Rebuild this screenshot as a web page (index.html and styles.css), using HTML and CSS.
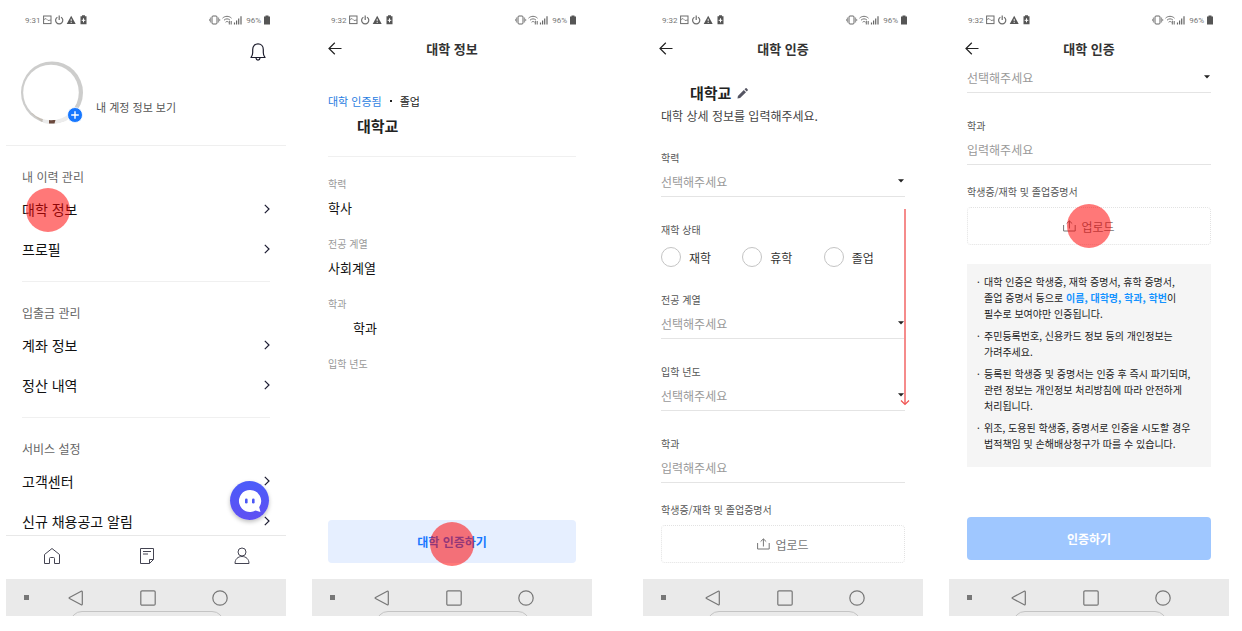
FILE: index.html
```html
<!DOCTYPE html>
<html lang="ko">
<head>
<meta charset="utf-8">
<meta name="viewport" content="width=device-width, initial-scale=1">
<title>대학 인증</title>
<link rel="stylesheet" href="styles.css">
</head>
<body>
<svg class="sprite" aria-hidden="true">
  <symbol id="status-left" viewBox="0 0 44 10">
    <g fill="none" stroke="#6c6c6c">
      <rect x="0.6" y="1" width="7.4" height="7.6"/>
      <path d="M1 4.500l2-1 2 2 3-.5" stroke-width=".8"/>
      <path d="M14.400 2.200a3.600 3.600 0 1 0 3.600 0M16.200.5v4.600" stroke-width="1.200"/>
    </g>
    <path d="M28.200.8l4.500 8.200h-9z" fill="#555"/>
    <path d="M28.200 3.800v2.500M28.200 7v1" stroke="#fff" stroke-width=".9"/>
    <path d="M39 .3h3v1h1.500v8h-6v-8H39z" fill="#555"/>
    <path d="M40.500 3.300v4M38.700 5.300h3.600" stroke="#fff"/>
  </symbol>
  <symbol id="status-right" viewBox="0 0 34 10">
    <g fill="none" stroke="#666">
      <rect x="3" y="1" width="5" height="8" rx="1"/>
      <path d="M1.400 2.500v5M9.600 2.500v5M.3 4v2M10.700 4v2" stroke-width=".7"/>
      <path d="M13.500 3.200c2.500-2.500 6.500-2.500 9 0M15 5.200c1.800-1.800 4.300-1.800 6 0M16.600 7.200c.9-.9 2-.9 2.800 0" stroke-width=".9"/>
      <path d="M20.300 6v3.500M22.200 6v3.500" stroke-width="1"/>
      <path d="M25.500 7.500v2M27.600 5.500v4M29.700 3.500v6M32 1.200v8.300" stroke-width="1.200"/>
    </g>
  </symbol>
  <symbol id="battery" viewBox="0 0 6 10"><path d="M1.500.5h3v1H6v8H0v-8h1.500z" fill="#555"/></symbol>
  <symbol id="back" viewBox="0 0 14 13"><path d="M6.800.8L1 6.500l5.800 5.700M1 6.500h12.500" fill="none" stroke="#222" stroke-width="1.200"/></symbol>
  <symbol id="chevron" viewBox="0 0 6 10"><path d="M.8.900L5 5 .8 9.100" fill="none" stroke="#1d1d33" stroke-width="1.200"/></symbol>
  <symbol id="caret" viewBox="0 0 6 4"><path d="M0 .3h6L3 3.600z" fill="#222"/></symbol>
  <symbol id="upload" viewBox="0 0 13 12"><path d="M.6 5v6h11.600V5M6.400 8.500V1M3.600 3.600L6.400.9l2.800 2.700" fill="none" stroke="#777"/></symbol>
  <symbol id="nav-back" viewBox="0 0 16 16"><path d="M13.200 1.300Q14.300.8 14.300 2v12q0 1.200-1.100.7L1.500 8.600q-.9-.6 0-1.200z" fill="none" stroke="#777" stroke-width="1.200"/></symbol>
  <symbol id="nav-home" viewBox="0 0 16 16"><rect x=".8" y=".8" width="14.400" height="14.400" rx="1.200" fill="none" stroke="#777" stroke-width="1.200"/></symbol>
  <symbol id="nav-recent" viewBox="0 0 16 16"><circle cx="8" cy="8" r="7.200" fill="none" stroke="#777" stroke-width="1.200"/></symbol>
</svg>

<main class="board">
  <div class="pair">
    <section class="phone">
      <div class="status"><span>9:31</span><svg class="status-left"><use href="#status-left"/></svg><svg class="status-right"><use href="#status-right"/></svg><span>96%</span><svg class="battery"><use href="#battery"/></svg></div>
      <div class="screen home">
        <div class="bell-row">
          <button class="icon-button" aria-label="알림">
            <svg class="bell" viewBox="0 0 16 18"><path d="M1 14.500c1.500-1.700 1.700-2.500 1.700-5V6.500C2.700 3 5 .8 8 .8s5.300 2.200 5.300 5.700v3c0 2.500.2 3.300 1.700 5zM6 15c.2 2.700 3.800 2.700 4 0" fill="none" stroke="#1d1d2d" stroke-width="1.200" stroke-linejoin="round"/></svg>
          </button>
        </div>
        <div class="profile">
          <div class="avatar">
            <svg class="avatar-ring" viewBox="0 0 62 63">
              <circle cx="31" cy="31.500" r="31" fill="#cdcdcc"/>
              <path d="M14 50L23 62q10 2.500 22-2l8-8z" fill="#ececec"/>
              <path d="M10 52l11 9 1-3-10-8z" fill="#c4beb6"/>
              <path d="M28 59h6.500l-1 3.400H28z" fill="#6b4a3e"/>
              <circle cx="30" cy="31.500" r="27.800" fill="#fff"/>
            </svg>
            <svg class="avatar-add" viewBox="0 0 16 16"><circle cx="8" cy="8" r="7.500" fill="#1677ff" stroke="#fff" stroke-width=".8"/><path d="M8 4.200v7.600M4.200 8h7.600" stroke="#fff" stroke-width="1.400"/></svg>
          </div>
          <a class="profile-link" href="#">내 계정 정보 보기</a>
        </div>
        <nav class="menu">
          <h2 class="menu-title">내 이력 관리</h2>
          <a class="menu-item" href="#">대학 정보<svg class="chevron"><use href="#chevron"/></svg><span class="tap tap-menu"></span></a>
          <a class="menu-item" href="#">프로필<svg class="chevron"><use href="#chevron"/></svg></a>
        </nav>
        <nav class="menu">
          <h2 class="menu-title">입출금 관리</h2>
          <a class="menu-item" href="#">계좌 정보<svg class="chevron"><use href="#chevron"/></svg></a>
          <a class="menu-item" href="#">정산 내역<svg class="chevron"><use href="#chevron"/></svg></a>
        </nav>
        <nav class="menu">
          <h2 class="menu-title">서비스 설정</h2>
          <a class="menu-item" href="#">고객센터<svg class="chevron"><use href="#chevron"/></svg></a>
          <a class="menu-item" href="#">신규 채용공고 알림<svg class="chevron"><use href="#chevron"/></svg></a>
        </nav>
      </div>
      <nav class="tabs">
        <a href="#" aria-label="홈"><svg class="tab-icon" viewBox="0 0 18 18"><path d="M1.500 7.500L9 1.500l7.500 6v9h-5v-5q0-1-1-1h-3q-1 0-1 1v5h-5z" fill="none" stroke="#444452"/></svg></a>
        <a href="#" aria-label="공고"><svg class="tab-icon" viewBox="0 0 18 18"><path d="M2.500 1.500h13v11l-4 4h-9zM15.500 12.500h-4v4M5 4.500h8M5 7h5" fill="none" stroke="#444452"/></svg></a>
        <a href="#" aria-label="내 정보"><svg class="tab-icon" viewBox="0 0 18 18"><path d="M2 16.500c0-4.500 3-7 7-7s7 2.500 7 7z" fill="none" stroke="#444452"/><circle cx="9" cy="5" r="4" fill="none" stroke="#444452"/></svg></a>
        <button class="chat" aria-label="상담">
          <svg class="chat-icon" viewBox="0 0 24 24"><path d="M12 1a11 11 0 1 0 5.500 20.500L22.500 23l-1.300-4.800A11 11 0 0 0 12 1z" fill="#fff"/><rect x="7" y="9.500" width="2.600" height="5" rx="1.300" fill="#4b57f5"/><rect x="14" y="9.500" width="2.600" height="5" rx="1.300" fill="#4b57f5"/></svg>
        </button>
      </nav>
      <div class="system-nav"><i class="dot"></i><svg><use href="#nav-back"/></svg><svg><use href="#nav-home"/></svg><svg><use href="#nav-recent"/></svg></div>
    </section>

    <section class="phone">
      <div class="status"><span>9:32</span><svg class="status-left"><use href="#status-left"/></svg><svg class="status-right"><use href="#status-right"/></svg><span>96%</span><svg class="battery"><use href="#battery"/></svg></div>
      <header class="header"><button class="icon-button" aria-label="뒤로"><svg class="back"><use href="#back"/></svg></button><h1 class="title">대학 정보</h1></header>
      <div class="screen info">
        <div class="summary">
          <p class="verified"><span class="blue">대학 인증됨</span><i class="separator"></i><span>졸업</span></p>
          <h2 class="school">대학교</h2>
        </div>
        <dl class="details">
          <dt>학력</dt><dd>학사</dd>
          <dt>전공 계열</dt><dd>사회계열</dd>
          <dt>학과</dt><dd class="masked">학과</dd>
          <dt>입학 년도</dt>
        </dl>
        <button class="action action-light">대학 인증하기<span class="tap tap-center tap-low"></span></button>
      </div>
      <div class="system-nav"><i class="dot"></i><svg><use href="#nav-back"/></svg><svg><use href="#nav-home"/></svg><svg><use href="#nav-recent"/></svg></div>
    </section>
  </div>

  <div class="pair">
    <section class="phone">
      <div class="status"><span>9:32</span><svg class="status-left"><use href="#status-left"/></svg><svg class="status-right"><use href="#status-right"/></svg><span>96%</span><svg class="battery"><use href="#battery"/></svg></div>
      <header class="header"><button class="icon-button" aria-label="뒤로"><svg class="back"><use href="#back"/></svg></button><h1 class="title">대학 인증</h1></header>
      <form class="screen form">
        <div class="intro">
          <h2 class="school">대학교<svg class="pencil" viewBox="0 0 11 11"><path d="M.5 10.500l.4-2.600L6.800 2l2.200 2.200-5.900 5.900zM7.500 1.300L8.600.3q.5-.4 1 0l1.100 1.100q.4.500 0 1L9.700 3.500z" fill="#555562"/></svg></h2>
          <p class="guide">대학 상세 정보를 입력해주세요.</p>
        </div>
        <div class="field">
          <label for="degree">학력</label>
          <div class="select"><select id="degree"><option>선택해주세요</option></select><svg class="caret"><use href="#caret"/></svg></div>
        </div>
        <fieldset class="field">
          <legend>재학 상태</legend>
          <div class="radios">
            <label><input type="radio" name="state">재학</label>
            <label><input type="radio" name="state">휴학</label>
            <label><input type="radio" name="state">졸업</label>
          </div>
        </fieldset>
        <div class="field">
          <label for="major">전공 계열</label>
          <div class="select"><select id="major"><option>선택해주세요</option></select><svg class="caret"><use href="#caret"/></svg></div>
        </div>
        <div class="field">
          <label for="year">입학 년도</label>
          <div class="select"><select id="year"><option>선택해주세요</option></select><svg class="caret"><use href="#caret"/></svg></div>
        </div>
        <div class="field">
          <label for="dept">학과</label>
          <input class="text" id="dept" type="text" placeholder="입력해주세요">
        </div>
        <div class="field file">
          <label for="upload-1">학생증/재학 및 졸업증명서</label>
          <button class="upload" id="upload-1" type="button"><svg class="upload-icon"><use href="#upload"/></svg>업로드</button>
        </div>
        <svg class="scroll-arrow" viewBox="0 0 10 197"><path d="M5 0v195" stroke="#f58b8b" stroke-width="2"/><path d="M1 191.500l4 4 4-4" fill="none" stroke="#ef5350" stroke-width="1.200"/></svg>
      </form>
      <div class="system-nav"><i class="dot"></i><svg><use href="#nav-back"/></svg><svg><use href="#nav-home"/></svg><svg><use href="#nav-recent"/></svg></div>
    </section>

    <section class="phone">
      <div class="status"><span>9:32</span><svg class="status-left"><use href="#status-left"/></svg><svg class="status-right"><use href="#status-right"/></svg><span>96%</span><svg class="battery"><use href="#battery"/></svg></div>
      <header class="header"><button class="icon-button" aria-label="뒤로"><svg class="back"><use href="#back"/></svg></button><h1 class="title">대학 인증</h1></header>
      <form class="screen form">
        <div class="select"><select aria-label="입학 년도"><option>선택해주세요</option></select><svg class="caret"><use href="#caret"/></svg></div>
        <div class="field">
          <label for="dept-2">학과</label>
          <input class="text" id="dept-2" type="text" placeholder="입력해주세요">
        </div>
        <div class="field file">
          <label for="upload-2">학생증/재학 및 졸업증명서</label>
          <button class="upload" id="upload-2" type="button"><svg class="upload-icon"><use href="#upload"/></svg>업로드<span class="tap tap-center"></span></button>
        </div>
        <ul class="notice">
          <li>대학 인증은 학생증, 재학 증명서, 휴학 증명서,<br>졸업 증명서 등으로 <b>이름, 대학명, 학과, 학번</b>이<br>필수로 보여야만 인증됩니다.</li>
          <li>주민등록번호, 신용카드 정보 등의 개인정보는<br>가려주세요.</li>
          <li>등록된 학생증 및 증명서는 인증 후 즉시 파기되며,<br>관련 정보는 개인정보 처리방침에 따라 안전하게<br>처리됩니다.</li>
          <li>위조, 도용된 학생증, 증명서로 인증을 시도할 경우<br>법적책임 및 손해배상청구가 따를 수 있습니다.</li>
        </ul>
        <button class="action action-solid" type="button">인증하기</button>
      </form>
      <div class="system-nav"><i class="dot"></i><svg><use href="#nav-back"/></svg><svg><use href="#nav-home"/></svg><svg><use href="#nav-recent"/></svg></div>
    </section>
  </div>
</main>
</body>
</html>
```

FILE: styles.css
```css
* {
  box-sizing: border-box;
}

body {
  margin: 0;
  background: #fff;
  color: #222;
  font-family: "Noto Sans CJK KR", sans-serif;
  font-size: 12px;
}

h1, h2, p, ul, dl, dd {
  margin: 0;
  padding: 0;
  font-weight: 400;
}

a {
  color: inherit;
  text-decoration: none;
}

button, input, select {
  margin: 0;
  padding: 0;
  border: 0;
  background: none;
  color: inherit;
  font: inherit;
}

svg {
  display: block;
}

.sprite {
  position: absolute;
  width: 0;
  height: 0;
}

.board {
  display: flex;
  gap: 51px;
  min-height: 100vh;
  padding: 0 13px 15px 6px;
}

.pair {
  display: flex;
  flex: 1;
  gap: 26px;
}

.phone {
  display: flex;
  flex: 1 1 0;
  flex-direction: column;
  min-width: 0;
}

.status {
  display: flex;
  align-items: center;
  gap: 3px;
  height: 35px;
  padding: 5px 16px 0 19px;
  color: #777;
  font-family: Roboto, sans-serif;
  font-size: 8px;
}

.status-left {
  width: 44px;
  height: 10px;
}

.status-right {
  width: 34px;
  height: 10px;
  margin-left: auto;
}

.battery {
  width: 6px;
  height: 10px;
}

.header {
  display: grid;
  grid-template-columns: 14px 1fr 14px;
  align-items: center;
  height: 27px;
  padding: 0 16px;
}

.back {
  width: 14px;
  height: 13px;
}

.title {
  color: #333;
  font-size: 13px;
  font-weight: 700;
  line-height: 20px;
  text-align: center;
}

.screen {
  position: relative;
  display: flex;
  flex: 1;
  flex-direction: column;
}

.tap {
  position: absolute;
  width: 44px;
  height: 44px;
  border-radius: 50%;
  background: rgba(255, 0, 0, 0.53);
}

.tap-menu {
  top: -1px;
  left: 4px;
}

.tap-center {
  top: 50%;
  left: 50%;
  transform: translate(-50%, -50%);
}

.tap-low {
  top: 55%;
}

/* Home */
.home {
  flex: 1 1 0;
  min-height: 0;
  overflow: hidden;
}

.bell-row {
  display: flex;
  flex: none;
  align-items: flex-end;
  justify-content: flex-end;
  height: 26px;
  padding: 0 20px 0;
}

.bell {
  width: 16px;
  height: 18px;
}

.profile {
  display: flex;
  flex: none;
  align-items: flex-end;
  gap: 13px;
  padding: 0 15px 21px;
  border-bottom: 1px solid #efefef;
}

.avatar {
  position: relative;
}

.avatar-ring {
  width: 62px;
  height: 63px;
}

.avatar-add {
  position: absolute;
  right: 0;
  bottom: 1px;
  width: 16px;
  height: 16px;
}

.profile-link {
  margin-bottom: 9px;
  color: #555;
  font-size: 11px;
  line-height: 16px;
}

.menu {
  flex: none;
  margin: 0 16px;
  padding: 19px 0 12px;
  border-bottom: 1px solid #f0f0f0;
}

.menu-title {
  color: #666;
  font-size: 12px;
  line-height: 24px;
}

.menu-item {
  position: relative;
  display: flex;
  align-items: center;
  justify-content: space-between;
  height: 40px;
  color: #111;
  font-size: 14px;
}

.chevron {
  width: 6px;
  height: 10px;
}

.tabs {
  position: relative;
  display: flex;
  align-items: center;
  justify-content: space-between;
  height: 44px;
  padding: 0 35px 3px 37px;
  border-top: 1px solid #e8e8e8;
}

.tab-icon {
  width: 18px;
  height: 18px;
}

.chat {
  position: absolute;
  top: -55px;
  right: 17px;
  display: grid;
  place-items: center;
  width: 39px;
  height: 39px;
  border-radius: 50%;
  background: linear-gradient(#4a5cfa, #6050f2);
  box-shadow: 0 2px 4px rgba(0, 0, 0, 0.25);
}

.chat-icon {
  width: 24px;
  height: 24px;
}

/* University info */
.info {
  padding: 0 16px;
}

.summary {
  padding: 29px 0 18px;
  border-bottom: 1px solid #f0f0f0;
}

.verified {
  display: flex;
  align-items: center;
  gap: 8px;
  font-size: 11px;
  line-height: 20px;
}

.blue {
  color: #2a7de1;
}

.separator {
  width: 2px;
  height: 2px;
  background: #222;
}

.school {
  display: flex;
  align-items: center;
  gap: 6px;
  padding-left: 29px;
  color: #222;
  font-size: 15px;
  font-weight: 700;
  line-height: 24px;
}

.summary .school {
  margin-top: 3px;
}

.details {
  padding-top: 19px;
}

.details dt {
  color: #999;
  font-size: 10px;
  line-height: 16px;
}

.details dd {
  margin: 6px 0 18px;
  color: #111;
  font-size: 13px;
  line-height: 20px;
}

.details .masked {
  padding-left: 25px;
}

.action {
  position: relative;
  height: 43px;
  margin-top: auto;
  border-radius: 4px;
  font-size: 12px;
  font-weight: 700;
}

.action-light {
  margin-bottom: 16px;
  background: #e6efff;
  color: #1677ff;
}

.action-solid {
  margin-bottom: 19px;
  background: #9fc7ff;
  color: #fff;
}

/* Verification form */
.form {
  padding: 0 18px;
}

.intro {
  padding-top: 19px;
}

.guide {
  color: #444;
  line-height: 22px;
}

.pencil {
  width: 11px;
  height: 11px;
}

.field {
  min-width: 0;
  margin: 25px 0 0;
  padding: 0;
  border: 0;
}

.intro + .field {
  margin-top: 23px;
}

.field > label,
.field legend {
  display: block;
  padding: 0;
  color: #555;
  font-size: 10px;
  line-height: 16px;
}

.select {
  position: relative;
}

.select select,
.text {
  display: block;
  width: 100%;
  height: 31px;
  border-bottom: 1px solid #e4e4e4;
  border-radius: 0;
  color: #999;
  font-size: 12px;
  appearance: none;
}

.text::placeholder {
  color: #999;
  opacity: 1;
}

.caret {
  position: absolute;
  top: 13px;
  right: 1px;
  width: 6px;
  height: 4px;
}

.radios {
  display: grid;
  grid-template-columns: repeat(3, 1fr);
  padding-top: 9px;
}

.radios label {
  display: flex;
  align-items: center;
  gap: 8px;
  height: 20px;
  color: #333;
}

.radios input {
  width: 20px;
  height: 20px;
  border: 1px solid #c4c4c4;
  border-radius: 50%;
  appearance: none;
}

.file {
  margin-top: 19px;
}

.upload {
  position: relative;
  display: flex;
  align-items: center;
  justify-content: center;
  gap: 5px;
  width: 100%;
  height: 38px;
  margin-top: 7px;
  border: 1px dotted #e2e2e2;
  border-radius: 4px;
  color: #777;
}

.upload-icon {
  width: 13px;
  height: 12px;
}

.form .file:nth-last-child(2) {
  margin-bottom: 16px;
}

.notice {
  display: flex;
  flex-direction: column;
  gap: 6px;
  margin: 19px 0;
  padding: 10px 10px 15px;
  background: #f5f5f5;
  color: #222;
  font-size: 10px;
  line-height: 16px;
  list-style: none;
  white-space: nowrap;
}

.notice li {
  display: flow-root;
  position: relative;
  padding-left: 7px;
}

.notice li::before {
  position: absolute;
  top: 0;
  left: 0;
  content: "·";
}

.notice b {
  color: #1693ff;
  font-weight: 700;
}

.scroll-arrow {
  position: absolute;
  top: 147px;
  right: 13px;
  width: 10px;
  height: 197px;
}

/* System navigation */
.system-nav {
  position: relative;
  display: grid;
  grid-template-columns: 12% repeat(3, 26fr) 11fr;
  align-items: center;
  justify-items: center;
  height: 37px;
  overflow: hidden;
  background: #eaeaea;
}

.system-nav svg {
  width: 16px;
  height: 16px;
}

.system-nav .dot {
  justify-self: end;
  width: 5px;
  height: 5px;
  margin-right: 11px;
  background: #777;
}

.system-nav::after {
  position: absolute;
  top: 32px;
  left: 23%;
  width: 54%;
  height: 24px;
  border: 1px solid #c4c4c4;
  border-radius: 12px;
  content: "";
}
```
